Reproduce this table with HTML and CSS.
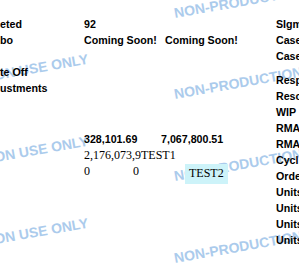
FILE: index.html
```html
<!DOCTYPE html>
<html>
<head>
<meta charset="utf-8">
<link rel="stylesheet" href="styles.css">
</head>
<body>
<div class="watermarks">
  <span class="wm l r1">NON-PRODUCTION USE ONLY</span>
  <span class="wm l r2">NON-PRODUCTION USE ONLY</span>
  <span class="wm l r3">NON-PRODUCTION USE ONLY</span>
  <span class="wm l r4">NON-PRODUCTION USE ONLY</span>
  <span class="wm r r1">NON-PRODUCTION USE ONLY</span>
  <span class="wm r r2">NON-PRODUCTION USE ONLY</span>
  <span class="wm r r3">NON-PRODUCTION USE ONLY</span>
  <span class="wm r r4">NON-PRODUCTION USE ONLY</span>
</div>
<div class="page">
  <div class="main">
    <div class="grid top">
      <div class="c1">eted</div><div class="c2">92</div><div class="c3"></div>
      <div class="c1">bo</div><div class="c2">Coming Soon!</div><div class="c3">Coming Soon!</div>
      <div class="c1">&nbsp;</div><div class="c2"></div><div class="c3"></div>
      <div class="c1">te Off</div><div class="c2"></div><div class="c3"></div>
      <div class="c1">ustments</div><div class="c2"></div><div class="c3"></div>
    </div>
    <div class="grid mid">
      <div class="m-lbl">&nbsp;</div><div class="m-a">328,101.69</div><div class="m-b">7,067,800.51</div>
      <div class="m-lbl serif">&nbsp;</div><div class="m-wide serif">2,176,073,9TEST1</div>
      <div class="m-lbl serif">&nbsp;</div><div class="serif">0</div><div class="serif">0</div><div></div><div class="serif"><span class="hl">TEST2</span></div>
    </div>
  </div>
  <div class="side">
    <div class="item">SIgma</div>
    <div class="item">Cases</div>
    <div class="item">Cases</div>
    <div class="item gap">Resp</div>
    <div class="item">Reso</div>
    <div class="item">WIP</div>
    <div class="item">RMA</div>
    <div class="item">RMA</div>
    <div class="item">Cycl</div>
    <div class="item">Orde</div>
    <div class="item">Units</div>
    <div class="item">Units</div>
    <div class="item">Units</div>
    <div class="item">Units</div>
  </div>
</div>
</body>
</html>
```

FILE: styles.css
```css
html, body {
  margin: 0;
  padding: 0;
  background: #ffffff;
}
body {
  width: 299px;
  height: 274px;
  overflow: hidden;
  position: relative;
  font-family: "Liberation Sans", Arial, sans-serif;
  font-weight: bold;
  font-size: 10.67px;
  line-height: 16px;
  color: #000000;
}
.page {
  position: relative;
  z-index: 1;
  display: flex;
  align-items: flex-start;
}
.main {
  width: 276px;
  flex: none;
  padding-top: 16px;
}
.grid {
  display: grid;
  white-space: nowrap;
}
.top {
  grid-template-columns: 84px 81px 1fr;
}
.mid {
  margin-top: 35px;
  grid-template-columns: 84px 49px 28px 24px 1fr;
}
.m-lbl {
  grid-column: 1;
}
.m-a {
  grid-column: 2 / 4;
}
.m-b {
  grid-column: 4 / 6;
}
.m-wide {
  grid-column: 2 / 6;
}
.serif {
  font-family: "Liberation Serif", "Times New Roman", serif;
  font-weight: normal;
  font-size: 12px;
}
.hl {
  display: inline-block;
  background: #cdf3f9;
  padding: 1px 4px 3px 4px;
  margin-top: 1px;
  line-height: 16px;
}
.side {
  flex: none;
  padding-top: 16px;
  white-space: nowrap;
}
.item {
  height: 16px;
}
.item.gap {
  margin-top: 8px;
}
.watermarks {
  position: absolute;
  inset: 0;
  z-index: 0;
  pointer-events: none;
  overflow: hidden;
}
.wm {
  position: absolute;
  font-family: "Liberation Sans", Arial, sans-serif;
  font-weight: bold;
  font-size: 14px;
  line-height: 14px;
  color: #abcbec;
  white-space: nowrap;
  transform-origin: 0 12px;
  transform: rotate(-10deg);
}
.wm.l { left: -112px; }
.wm.r { left: 175px; }
.wm.r1 { top: 6px; }
.wm.r2 { top: 87px; }
.wm.r3 { top: 169px; }
.wm.r4 { top: 251px; }
```
